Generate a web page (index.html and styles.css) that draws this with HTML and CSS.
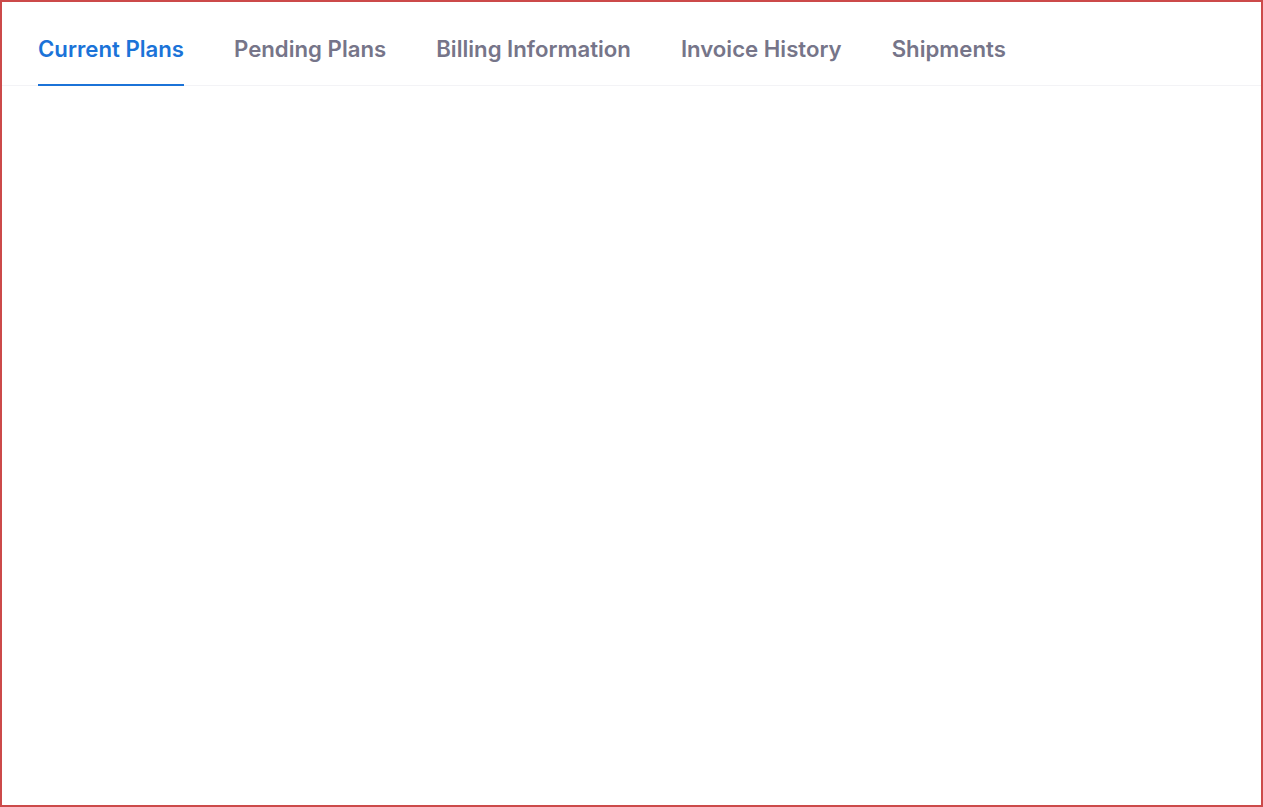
FILE: index.html
```html
<!DOCTYPE html>
<html lang="en">
<head>
    <meta charset="UTF-8">
    <meta name="viewport" content="width=device-width, initial-scale=1.0">
    <title>Plans</title>
    <link rel="stylesheet" href="styles.css">
</head>
<body>
    <div class="frame">
        <nav class="tabs">
            <a class="tab active" href="#">Current Plans</a>
            <a class="tab" href="#">Pending Plans</a>
            <a class="tab" href="#">Billing Information</a>
            <a class="tab" href="#">Invoice History</a>
            <a class="tab" href="#">Shipments</a>
        </nav>
    </div>
</body>
</html>
```

FILE: styles.css
```css
* {
    margin: 0;
    padding: 0;
    box-sizing: border-box;
}
body {
    font-family: 'Inter', 'Liberation Sans', sans-serif;
    background-color: #fff;
}
.frame {
    height: 807px;
    border: 2px solid #cc4a4a;
}
.tabs {
    display: flex;
    gap: 50px;
    padding: 0 36px;
    border-bottom: 1px solid #f3f3f6;
}
.tab {
    display: block;
    padding: 31px 0 19px;
    font-size: 22.2px;
    line-height: 32px;
    font-weight: 600;
    color: #767589;
    text-decoration: none;
    border-bottom: 2px solid transparent;
    margin-bottom: -1px;
}
.tab.active {
    color: #1b73d8;
    border-bottom-color: #1b73d8;
}
```
